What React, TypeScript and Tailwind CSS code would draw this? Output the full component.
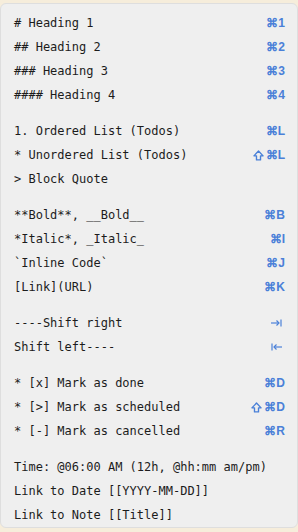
const mono = { fontFamily: '"DejaVu Sans Mono", "Liberation Mono", monospace' };

type Row = { text: string; keys?: string; shift?: boolean; icon?: "right" | "left" };

const groups: Row[][] = [
  [
    { text: "# Heading 1", keys: "⌘1" },
    { text: "## Heading 2", keys: "⌘2" },
    { text: "### Heading 3", keys: "⌘3" },
    { text: "#### Heading 4", keys: "⌘4" },
  ],
  [
    { text: "1. Ordered List (Todos)", keys: "⌘L" },
    { text: "* Unordered List (Todos)", keys: "⌘L", shift: true },
    { text: "> Block Quote" },
  ],
  [
    { text: "**Bold**, __Bold__", keys: "⌘B" },
    { text: "*Italic*, _Italic_", keys: "⌘I" },
    { text: "`Inline Code`", keys: "⌘J" },
    { text: "[Link](URL)", keys: "⌘K" },
  ],
  [
    { text: "----Shift right", icon: "right" },
    { text: "Shift left----", icon: "left" },
  ],
  [
    { text: "* [x] Mark as done", keys: "⌘D" },
    { text: "* [>] Mark as scheduled", keys: "⌘D", shift: true },
    { text: "* [-] Mark as cancelled", keys: "⌘R" },
  ],
  [
    { text: "Time: @06:00 AM (12h, @hh:mm am/pm)" },
    { text: "Link to Date [[YYYY-MM-DD]]" },
    { text: "Link to Note [[Title]]" },
  ],
];

function ShiftIcon() {
  return (
    <svg width="11" height="11" viewBox="0 0 12 12" className="mr-[2px]">
      <path d="M6 1.2 L11 6.4 H8.2 V10.8 H3.8 V6.4 H1 Z" fill="none" stroke="#4a80d8" strokeWidth="1.5" strokeLinejoin="round" />
    </svg>
  );
}

function TabIcon({ dir }: { dir: "right" | "left" }) {
  return (
    <svg width="11" height="8" viewBox="0 0 11 8">
      {dir === "right" ? (
        <g stroke="#4a80d8" strokeWidth="1.2" fill="none">
          <path d="M0 4 H8" />
          <path d="M5.5 1.5 L8 4 L5.5 6.5" />
          <path d="M10 0.5 V7.5" />
        </g>
      ) : (
        <g stroke="#4a80d8" strokeWidth="1.2" fill="none">
          <path d="M3 4 H11" />
          <path d="M5.5 1.5 L3 4 L5.5 6.5" />
          <path d="M1 0.5 V7.5" />
        </g>
      )}
    </svg>
  );
}

export default function App() {
  return (
    <div className="h-[532px] w-[298px] bg-[#f6eddb] pt-[3px] pb-[4px]">
      <div className="flex h-full flex-col gap-3 rounded-[6px] border border-[#dedede] bg-[#efefef] pl-[13px] pr-[12px] pt-[7px]">
        {groups.map((g, i) => (
          <div key={i} className="flex flex-col">
            {g.map((r) => (
              <div key={r.text} className="flex h-6 items-center justify-between">
                <span style={mono} className="text-[12px] text-[#1c1c1c]">
                  {r.text}
                </span>
                {r.keys && (
                  <span
                    className="flex items-center text-[12px] font-bold text-[#4a80d8]"
                    style={{ fontFamily: '"Liberation Sans", Arial, sans-serif' }}
                  >
                    {r.shift && <ShiftIcon />}
                    {r.keys}
                  </span>
                )}
                {r.icon && (
                  <span className="mr-[3px] flex items-center">
                    <TabIcon dir={r.icon} />
                  </span>
                )}
              </div>
            ))}
          </div>
        ))}
      </div>
    </div>
  );
}
